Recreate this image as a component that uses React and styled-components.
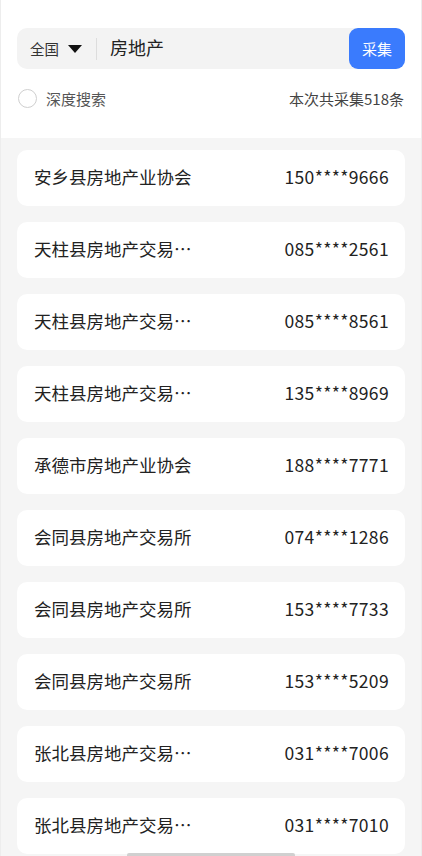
import React from "react";
import styled, { createGlobalStyle } from "styled-components";

const Global = createGlobalStyle`
  html, body {
    margin: 0;
    padding: 0;
    background: #f5f5f5;
  }
  body {
    font-family: "Noto Sans CJK SC", "Noto Sans", sans-serif;
    -webkit-font-smoothing: antialiased;
  }
  * { box-sizing: border-box; }
`;

const Page = styled.div`
  min-height: 856px;
  background: #f5f5f5;
  border-left: 1px solid #ededed;
  border-right: 1px solid #ededed;
`;

const Header = styled.div`
  background: #ffffff;
  padding: 28px 16px 0 16px;
  height: 138px;
`;

const SearchBar = styled.div`
  display: flex;
  align-items: center;
  height: 41px;
  background: #f3f3f3;
  border-radius: 10px;
`;

const Region = styled.div`
  display: flex;
  align-items: center;
  padding-left: 13px;
  font-size: 14.5px;
  color: #333;
  height: 100%;
`;

const Caret = styled.span`
  display: inline-block;
  width: 0;
  height: 0;
  margin-left: 9px;
  border-left: 7.5px solid transparent;
  border-right: 7.5px solid transparent;
  border-top: 8.5px solid #111;
`;

const Divider = styled.span`
  width: 1px;
  height: 22px;
  background: #dddddd;
  margin-left: 14px;
  margin-right: 13px;
`;

const Keyword = styled.div`
  flex: 1;
  font-size: 18px;
  color: #222;
  line-height: 1;
  padding-bottom: 3px;
`;

const SubmitButton = styled.button`
  width: 56px;
  height: 41px;
  border: none;
  border-radius: 9px;
  background: #3a7bfd;
  color: #ffffff;
  font-family: inherit;
  font-size: 15px;
  padding: 0;
`;

const OptionRow = styled.div`
  display: flex;
  align-items: center;
  justify-content: space-between;
  margin-top: 18px;
  height: 22px;
`;

const Check = styled.label`
  display: flex;
  align-items: center;
  gap: 9px;
  font-size: 15px;
  color: #555;
  padding-left: 1px;
`;

const Circle = styled.span`
  width: 19px;
  height: 19px;
  border-radius: 50%;
  border: 1.5px solid #cfcfcf;
  background: #fff;
`;

const Count = styled.div`
  font-size: 15px;
  color: #444;
  margin-right: 1px;
`;

const List = styled.div`
  display: flex;
  flex-direction: column;
  gap: 16px;
  padding: 12px 16px 0 16px;
`;

const Card = styled.div`
  display: flex;
  align-items: center;
  justify-content: space-between;
  height: 56px;
  padding: 0 16px 3px 17px;
  background: #ffffff;
  border-radius: 10px;
  font-size: 17.5px;
  line-height: 1;
  color: #222;
`;

const Name = styled.span`
  white-space: nowrap;
`;

const Phone = styled.span`
  white-space: nowrap;
  letter-spacing: 0.35px;
`;

const HomeBar = styled.div`
  position: fixed;
  left: 127px;
  bottom: 0;
  width: 168px;
  height: 3px;
  background: #d0d0d0;
  border-radius: 2px 2px 0 0;
`;

const rows = [
  ["安乡县房地产业协会", "150****9666"],
  ["天柱县房地产交易…", "085****2561"],
  ["天柱县房地产交易…", "085****8561"],
  ["天柱县房地产交易…", "135****8969"],
  ["承德市房地产业协会", "188****7771"],
  ["会同县房地产交易所", "074****1286"],
  ["会同县房地产交易所", "153****7733"],
  ["会同县房地产交易所", "153****5209"],
  ["张北县房地产交易…", "031****7006"],
  ["张北县房地产交易…", "031****7010"],
];

export default function App() {
  return (
    <>
      <Global />
      <Page>
        <Header>
          <SearchBar>
            <Region>
              全国
              <Caret />
            </Region>
            <Divider />
            <Keyword>房地产</Keyword>
            <SubmitButton>采集</SubmitButton>
          </SearchBar>
          <OptionRow>
            <Check>
              <Circle />
              深度搜索
            </Check>
            <Count>本次共采集518条</Count>
          </OptionRow>
        </Header>
        <List>
          {rows.map(([n, p], i) => (
            <Card key={i}>
              <Name>{n}</Name>
              <Phone>{p}</Phone>
            </Card>
          ))}
        </List>
      </Page>
      <HomeBar />
    </>
  );
}
